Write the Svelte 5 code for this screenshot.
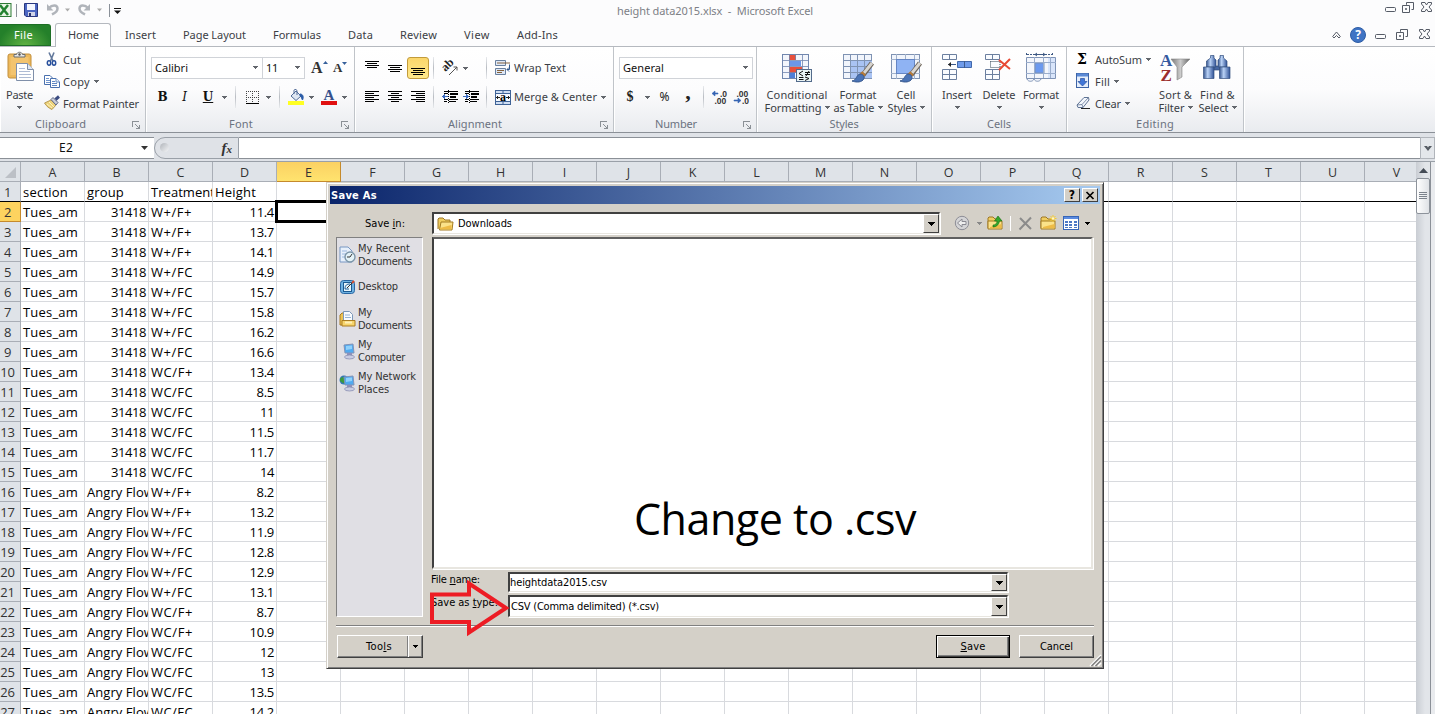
<script>
  // Tightens or loosens tracking so that a label occupies its designed width.
  function fit(node, width) {
    const natural = node.getBoundingClientRect().width;
    if (width) node.style.letterSpacing = `${(width - natural) / node.textContent.length}px`;
  }

  const tabs = [
    ['Insert', 30], ['Page Layout', 62], ['Formulas', 47], ['Data', 24],
    ['Review', 36], ['View', 25], ['Add-Ins', 40]
  ];
  const columns = 'ABCDEFGHIJKLMNOPQRSTUV'.split('');
  const a = 'W+/F+', b = 'W+/FC', c = 'WC/F+', d = 'WC/FC';
  const records = [
    [a, '11.4'], [a, '13.7'], [a, '14.1'], [b, '14.9'], [b, '15.7'], [b, '15.8'], [b, '16.2'],
    [b, '16.6'], [c, '13.4'], [d, '8.5'], [d, '11'], [d, '11.5'], [d, '11.7'], [d, '14'],
    [a, '8.2'], [a, '13.2'], [b, '11.9'], [b, '12.8'], [b, '12.9'], [b, '13.1'], [c, '8.7'],
    [c, '10.9'], [d, '12'], [d, '13'], [d, '13.5'], [d, '14.2']
  ];
  const numWidth = (s) => s.replace('.', '').length * 7 + (s.includes('.') ? 3.5 : 0);
  const rows = [
    [['section', 45], ['group', 37], ['Treatment', 64], ['Height', 41]],
    ...records.map(([t, h], i) => [
      ['Tues_am', 55],
      i < 14 ? ['31418', 35, true] : ['Angry Flow', 67],
      [t, t === a ? 41 : 42],
      [h, numWidth(h), true]
    ])
  ];
  const places = [
    ['recent', [['My Recent', 52], ['Documents', 54]]],
    ['desktop', [['Desktop', 40]]],
    ['docs', [['My', 14], ['Documents', 54]]],
    ['computer', [['My', 14], ['Computer', 47]]],
    ['network', [['My Network', 58], ['Places', 31]]]
  ];
</script>

{#snippet t(text, w)}<span class="t" use:fit={w}>{text}</span>{/snippet}
{#snippet key(pre, k, post, w)}<span class="t" use:fit={w}>{pre}<u>{k}</u>{post}</span>{/snippet}
{#snippet arr()}<svg class="arr" width="5" height="3" shape-rendering="crispEdges"><path d="M0 0H5V1H4V2H3V3H2V2H1V1H0Z" fill="currentColor" /></svg>{/snippet}
{#snippet drop()}<svg width="7" height="4" shape-rendering="crispEdges"><path d="M0 0H7V1H6V2H5V3H4V4H3V3H2V2H1V1H0Z" /></svg>{/snippet}
{#snippet launcher()}<svg class="launcher" width="8" height="8" shape-rendering="crispEdges"><path d="M0 6V0H7V1H1V6ZM3 3L7 7V4H8V8H4V7H6L3 4Z" fill="#8b9096" /></svg>{/snippet}

{#snippet winbtns(gap)}
  <svg class="winbtns" width={47 + gap * 2} height="13" fill="none" stroke="#555b66">
    <rect x=".5" y="6.5" width="10" height="4" rx="1" />
    <path transform="translate({gap} 0)" d="M21.5 3.500V1.500H28.500V8.500H26.500M17.500 4.500H24.500V11.500H17.500ZM20.500 7.500H21.500V8.500H20.500ZM21.500 4V3.500" />
    <path transform="translate({gap * 2} 0)" d="M36.500 1.500H40L41.500 4L43 1.500H46.500V3L44 6L46.500 9V10.500H43L41.500 8L40 10.500H36.500V9L39 6L36.500 3Z" />
  </svg>
{/snippet}

{#snippet lines(kind)}
  <svg width="14" height="14" shape-rendering="crispEdges">
    {#if kind === 'top'}<path d="M0 0h14v1H0zM2 2h10v1H2zM0 4h14v1H0zM2 6h10v1H2z" />
    {:else if kind === 'mid'}<path d="M0 4h14v1H0zM2 6h10v1H2zM0 8h14v1H0zM2 10h10v1H2z" />
    {:else if kind === 'bot'}<path d="M0 7h14v1H0zM2 9h10v1H2zM0 11h14v1H0zM2 13h10v1H2z" />
    {:else if kind === 'left'}<path d="M0 1h14v1H0zM0 3h9v1H0zM0 5h14v1H0zM0 7h9v1H0zM0 9h14v1H0zM0 11h9v1H0z" />
    {:else if kind === 'center'}<path d="M0 1h14v1H0zM3 3h8v1H3zM0 5h14v1H0zM3 7h8v1H3zM0 9h14v1H0zM3 11h8v1H3z" />
    {:else}<path d="M0 1h14v1H0zM5 3h9v1H5zM0 5h14v1H0zM5 7h9v1H5zM0 9h14v1H0zM5 11h9v1H5z" />{/if}
  </svg>
{/snippet}

{#snippet brush()}
  <path d="M30 10L21 22" stroke="#6b6258" stroke-width="5" />
  <path d="M30 10L22 20" stroke="#d8d5d0" stroke-width="3" />
  <path d="M22 20L19 23" stroke="#b87a35" stroke-width="5" />
  <path d="M10 28C15 27 14 22 18 21C22 21 23 25 21 27C18 30 13 29 10 28Z" fill="#4a73b5" stroke="#38598f" />
{/snippet}

{#snippet icon(name)}
  {#if name === 'paste'}
    <svg width="28" height="30">
      <rect x="2" y="2" width="23" height="24" rx="2" fill="#edb95c" stroke="#c28e3b" />
      <rect x="4.500" y="5" width="18" height="18" fill="#f3c46f" />
      <path d="M8 5V2.500H10.500C11 -.5 16 -.5 16.500 2.500H19V5Z" fill="#e8e8e8" stroke="#686c70" />
      <circle cx="13.500" cy="2.500" r="1.200" fill="#555" />
      <path d="M10.500 11.500H21.500L27.500 17.500V28.500H10.500Z" fill="#fff" stroke="#7f8fa9" />
      <path d="M21.500 11.500V17.500H27.500" fill="#dfe7f3" stroke="#7f8fa9" />
      <path d="M13 16.500H19M13 19.500H24M13 22.500H25M13 25.500H25" stroke="#aebbd4" />
    </svg>
  {:else if name === 'cut'}
    <svg width="16" height="16" fill="none">
      <path d="M5 1.500L9 10M10 1.500L6.500 10" stroke="#63799c" stroke-width="1.600" />
      <ellipse cx="5" cy="12" rx="1.700" ry="2.200" stroke="#274f9c" stroke-width="1.500" /><ellipse cx="10" cy="12" rx="1.700" ry="2.200" stroke="#274f9c" stroke-width="1.500" />
    </svg>
  {:else if name === 'copy'}
    <svg width="16" height="16" fill="#fff" stroke="#4a70ae">
      <path d="M.5 2.500H6L8.500 5V11.500H.5Z" /><path d="M2 5.500H5M2 7.500H6M2 9.500H6" stroke="#6f94cd" />
      <path d="M6.500 5.500H12L15.500 9V14.500H6.500Z" /><path d="M12 5.500V9H15M8 8.500H11M8 10.500H13M8 12.500H13" stroke="#5f86c2" />
    </svg>
  {:else if name === 'painter'}
    <svg width="16" height="16">
      <path d="M.5 8L7 5L12 10L8 14.500C5 13 3 12 .5 8Z" fill="#ecd27c" stroke="#a8893f" stroke-width=".8" />
      <path d="M3 9L8 13M5 7L10 12" stroke="#fff3bd" /><path d="M7 4.500L9 2.500L14 7.500L12 10Z" fill="#c9cdd9" stroke="#5f6784" />
      <path d="M11.500 4.500L15 1.500" stroke="#3c4c82" stroke-width="3" />
    </svg>
  {:else if name === 'border'}
    <svg width="13" height="13" shape-rendering="crispEdges" fill="none" stroke="#444"><path d="M0 .5H13M0 6.500H13M.5 0V12M6.500 0V12M12.500 0V12" stroke-dasharray="1 1" /><path d="M0 12.500H13" stroke="#000" /></svg>
  {:else if name === 'bucket'}
    <svg width="17" height="17">
      <path d="M3 7L8 2L13 7L8 11.500Z" fill="#dfe7f2" stroke="#526c98" /><path d="M6 5V1.500C6 0 9 0 9 2V6" fill="none" stroke="#526c98" />
      <path d="M12 5C15 5 16 8 14.500 11C13.500 10 14 8 12 7Z" fill="#2c5da8" stroke="#2c5da8" /><rect y="12" width="16" height="4" fill="#ff2" />
    </svg>
  {:else if name === 'fontcolor'}
    <svg width="16" height="17"><text x="2.500" y="11" font-family="Liberation Serif" font-weight="bold" font-size="15" fill="#35508c">A</text><rect y="12" width="16" height="4" fill="#e01010" /></svg>
  {:else if name === 'angle'}
    <svg width="16" height="16"><text transform="translate(5 12) rotate(-45)" font-family="Liberation Serif" font-weight="bold" font-size="12" x="-1" y="-1" fill="#222">ab</text><path d="M7 15L15 7M15 7H11.500M15 7V10.500" stroke="#555" fill="none" /></svg>
  {:else if name === 'outdent' || name === 'indent'}
    <svg width="16" height="16" shape-rendering="crispEdges">
      <path d="M2 2h14v1H2zM8 4h8v2H8zM8 7h6v2H8zM7 10h9v1H7zM2 12h3v1H2zM7 12h7v1H7zM2 4h4v1H2zM2 10h4v1H2zM6 1h1v1H6zM6 3h1v1H6zM6 5h1v1H6zM6 7h1v1H6zM6 9h1v1H6zM6 11h1v1H6zM6 13h1v1H6z" />
      {#if name === 'outdent'}<path d="M0 7.500L3 5V7H6V8H3V10Z" fill="#3b6bc0" />{:else}<path d="M6 7.500L3 5V7H0V8H3V10Z" fill="#3b6bc0" />{/if}
    </svg>
  {:else if name === 'wrap'}
    <svg width="16" height="16"><path d="M.5 .5H10.500V5.500H.5ZM.5 8.500H10.500V14.500H.5Z" fill="#dfe8f6" stroke="#69809f" /><path d="M2 3H15M2 10.500H9M2 12.500H7" stroke="#84633e" /><path d="M14.500 4.500V9.500H12M14 7.500L12 9.500L14 11.500" stroke="#31588d" fill="none" /></svg>
  {:else if name === 'merge'}
    <svg width="16" height="15"><rect x=".5" y=".5" width="15" height="14" fill="#cfdef3" stroke="#3e6296" /><path d="M1 3.500H15M1 11.500H15M8 0V3M8 12V15" stroke="#3e6296" /><rect x="1" y="4" width="14" height="7" fill="#f7faff" /><path d="M1 7.500H5M11 7.500H15M2.500 6V9M13.500 6V9" stroke="#222" /><text x="5" y="10.500" font-family="Liberation Serif" font-weight="bold" font-size="12">a</text></svg>
  {:else if name === 'incdec' || name === 'decdec'}
    <svg width="17" height="15" font-family="Liberation Sans" font-weight="bold" font-size="8.500" fill="#333">
      {#if name === 'incdec'}<text x="8" y="6.500">.0</text><text x="2.500" y="14">.00</text><path d="M0 3.500L3 1V3H6V4H3V6Z" fill="#3564b4" stroke="#3564b4" stroke-width=".6" />
      {:else}<text x="2.500" y="6.500">.00</text><text x="8" y="14">.0</text><path d="M7 10.500L4 8V10H0V11H4V13Z" fill="#3564b4" stroke="#3564b4" stroke-width=".6" />{/if}
    </svg>
  {:else if name === 'cond'}
    <svg width="32" height="30">
      <rect x="1.500" y="1.500" width="26" height="24" fill="#f3f6fc" stroke="#7187ae" />
      <path d="M8 2H15V7H8ZM8 14H21V20H8Z" fill="#e8503c" /><path d="M8 8H20V13H8Z" fill="#6c97e8" /><path d="M8 20H14V25H8Z" fill="#4f7fd8" />
      <path d="M1 7.500H28M1 13.500H28M1 19.500H28M8.500 1V26M14.500 1V7M21.500 1V26" stroke="#7187ae" stroke-width=".8" />
      <rect x="15.500" y="16.500" width="15" height="12" fill="#e9f3f5" stroke="#536b8b" />
      <path d="M22 18L18 20.500L22 23M18 24.500H22.500M18 26.500H22.500M24 19.500H29M24 21.500H29M28 18L25 23M24 24L28 25.500L24 27.500" fill="none" stroke="#111" />
    </svg>
  {:else if name === 'table' || name === 'style'}
    <svg width="32" height="30" fill="none">
      <rect x="1.500" y="1.500" width="28" height="24" fill="#f1f5fc" stroke="#7f93b3" />
      {#if name === 'table'}<rect x="8" y="8" width="22" height="17" fill="#a9c3f3" /><path d="M1 7.500H30M1 13.500H30M1 19.500H30M8.500 1V26M15.500 1V26M22.500 1V26" stroke="#7f93b3" />
      {:else}<path d="M1 6.500H30M1 20.500H30M6.500 1V26M24.500 1V26M15.500 1V6" stroke="#a3b3cb" /><rect x="6.500" y="6.500" width="18" height="14" fill="#8fb3f3" stroke="#6485c4" />{/if}
      {@render brush()}
    </svg>
  {:else if name === 'insert' || name === 'delete'}
    <svg width="32" height="30" fill="#fafcff" stroke="#6b7f9f">
      <path d="M1.500 1.500H15.500V6.500H1.500ZM8.500 1V7M1.500 16.500H15.500V26.500H1.500ZM8.500 16V27M1 21.500H16" />
      {#if name === 'insert'}<path d="M16.500 8.500H30.500V14.500H16.500Z" fill="#6f9bea" stroke="#4268ab" /><path d="M23.500 8V15M7 11.500H15" stroke="#3d5a8c" /><path d="M7 11.500L10 9V14Z" fill="#222" stroke="none" />
      {:else}<path d="M6.500 8.500H16V14.500H6.500Z" stroke-dasharray="1 1" stroke="#345" /><path d="M15 7L26 16M26 6L15 17" stroke="#e84a35" stroke-width="2" />{/if}
    </svg>
  {:else if name === 'format'}
    <svg width="32" height="30" fill="none" stroke="#7f93b5">
      <path d="M2 1.500H28M1.500 0V3M27.500 0V3" stroke="#3f5a84" stroke-dasharray="2 1" /><path d="M10 1.500H20M12 0L10 1.500L12 3M18 0L20 1.500L18 3" stroke="#3f5a84" />
      <path d="M1.500 4.500H30.500V25.500H1.500Z" fill="#f3f6fc" /><path d="M10 10H19V20H10Z" fill="#6b99ef" /><path d="M23 5H30V25H23Z" fill="#d9e5fa" stroke="none" />
      <path d="M1 9.500H31M1 20.500H31M9.500 4V25M18.500 4V25M25.500 4V25" stroke="#9aadcc" /><path d="M2 26C3 29 8 29 9 26C10 29 15 29 16 26" fill="#f3f6fc" />
    </svg>
  {:else if name === 'fill'}
    <svg width="13" height="16"><rect x=".5" y=".5" width="12" height="14" fill="#e5eefb" stroke="#3e64a6" /><path d="M1 2H12" stroke="#5b8ad6" stroke-width="3" /><path d="M4.500 5.500H8.500V8.500H11L6.500 13L2 8.500H4.500Z" fill="#4277d8" stroke="#2850a0" stroke-width=".7" /></svg>
  {:else if name === 'erase'}
    <svg width="15" height="14"><path d="M1 9L8 1.500H12.500L13 4L7 11.500H2Z" fill="#f3f6fc" stroke="#5f7394" /><path d="M1 9L6 8.500L12.500 1.500M6 8.500L7 11.500" stroke="#5f7394" fill="none" stroke-width=".8" /><path d="M5 12.500H14" stroke="#222" /></svg>
  {:else if name === 'sort'}
    <svg width="32" height="30" font-family="Liberation Serif" font-weight="bold" font-size="17">
      <defs><linearGradient id="fun"><stop stop-color="#777" /><stop offset=".5" stop-color="#ccc" /><stop offset="1" stop-color="#666" /></linearGradient></defs>
      <path d="M11 6H30L22 14V24L17 27V14Z" fill="url(#fun)" stroke="#888" stroke-width=".6" />
      <text x="0" y="12.500" fill="#35599f">A</text><text x=".5" y="28" fill="#9b2d2d">Z</text>
    </svg>
  {:else if name === 'find'}
    <svg width="32" height="30">
      <defs><linearGradient id="bin"><stop stop-color="#35548e" /><stop offset=".4" stop-color="#b9d2f6" /><stop offset="1" stop-color="#2f5196" /></linearGradient></defs>
      <g transform="translate(-1 0)" stroke="#34507f" stroke-width=".7"><path d="M13 13H18.500V17H13Z" fill="#4566a1" /><g fill="url(#bin)"><path d="M9.500 2.500H13V5L15 7V14H5.500V8L9.500 5Z" /><path d="M19 2.500H22.500V5L26 8V14H17V7L19 5Z" /><path d="M2.500 14H13V25.500H2.500Z" /><path d="M18.500 14H29V25.500H18.500Z" /></g></g>
    </svg>
  {:else if name === 'folder' || name === 'up' || name === 'new'}
    <svg width="17" height="16">
      <path d="M1 13V3L2 2H6L8 4H13V6" fill="#f0cd60" stroke="#9c7726" />
      {#if name === 'folder'}<path d="M2.500 14L4 6H16L15 14Z" fill="#fbe28a" stroke="#a37b22" />{:else}<path d="M1 14V6H15V14Z" fill="#fbe28a" stroke="#a37b22" />{/if}
      <path d="M3 13.200H14.500V9L3 12Z" fill="#eebb46" />
      {#if name === 'up'}<path d="M6 10C9 10 10 8 10 6H7.500L11 1L15 6H12.500C12 10 9 12 6 12Z" fill="#36a62c" stroke="#157013" stroke-width=".6" />{/if}
      {#if name === 'new'}<path d="M13 0V7M9.500 3.500H16.500M10.500 1L15.500 6M15.500 1L10.500 6" stroke="#f7cb30" /><circle cx="13" cy="3.500" r="1.300" fill="#fff8c8" />{/if}
    </svg>
  {:else if name === 'back'}
    <svg width="16" height="16"><circle cx="8" cy="8" r="6.700" fill="#d4d4d6" stroke="#8d8d96" /><path d="M3.500 8L8 4V6.500H12V9.500H8V12Z" fill="#eee" stroke="#898991" /></svg>
  {:else if name === 'x'}
    <svg width="15" height="15"><path d="M2 2L13 13M13 1.500L1.500 13.500" stroke="#8b8b8b" stroke-width="2" /></svg>
  {:else if name === 'views'}
    <svg width="16" height="14" shape-rendering="crispEdges"><rect x=".5" y=".5" width="15" height="13" fill="#fff" stroke="#3765b7" /><path d="M1 1H15V3H1Z" fill="#5b8be0" /><path d="M2 5h3v2H2zM6 5h3v2H6zM11 5h3v2h-3zM2 8h3v2H2zM6 8h3v2H6zM11 8h3v2h-3zM2 11h3v1H2zM6 11h3v1H6zM11 11h3v1h-3z" fill="#4d78c4" /></svg>
  {:else if name === 'recent'}
    <svg width="18" height="18"><path d="M1 1H9L13 5V16H1Z" fill="#e7f0fb" stroke="#7897c3" /><path d="M3 5H8M3 8H8M3 11H7" stroke="#9cb9de" /><circle cx="11" cy="11" r="5" fill="#e3f2f7" stroke="#7b95a8" stroke-width="1.400" /><path d="M11 11L13 8M11 11H8" stroke="#333" /></svg>
  {:else if name === 'desktop'}
    <svg width="18" height="18"><rect x="1.500" y="2.500" width="14" height="13" rx="3" fill="#6fb2e2" stroke="#2967a3" /><rect x="4.500" y="4.500" width="8" height="9" fill="#e7f5fc" stroke="#1c5a91" /><path d="M6 11C6 7 8 6 11 6M6 11H10" stroke="#195a97" fill="none" /><path d="M8 10L15 3" stroke="#333" /><path d="M13 5L15 3" stroke="#d44a2c" stroke-width="2" /></svg>
  {:else if name === 'docs'}
    <svg width="18" height="18"><path d="M1 5L3 3H6V15H1Z" fill="#ecc353" stroke="#ab7d22" /><path d="M4.500 1.500H10.500L13.500 4.500V12H4.500Z" fill="#f8fbff" stroke="#7e98b9" /><path d="M6 5H11M6 7.500H12" stroke="#97b3d2" /><path d="M3 10.500H16V16H3Z" fill="#f7d56d" stroke="#ab7d22" /><path d="M6 12.500H13" stroke="#fff0b8" stroke-width="2" /></svg>
  {:else if name === 'computer' || name === 'network'}
    <svg width="18" height="18">{#if name === 'network'}<circle cx="5" cy="6" r="4.500" fill="#3377b5" /><path d="M1 5C3 1 5 5 8 3V8C5 11 3 8 1 7Z" fill="#3b9b3d" />{/if}<path d="M5 3L14 2L15 11L6 11Z" fill="#51aaf0" stroke="#8393b6" /><path d="M7 4L13 3.500V7L7 8Z" fill="#91d1fb" /><path d="M8 11H13V14H8Z" fill="#8f90ba" /><ellipse cx="10.500" cy="15" rx="5" ry="2" fill="#c9cce2" stroke="#8288aa" stroke-width=".7" /></svg>
  {/if}
{/snippet}

{#snippet big(name, l1, w1, l2, w2)}
  <div class="big">
    <div class="bigicon">{@render icon(name)}</div>
    <div class="line">{@render t(l1, w1)}</div>
    <div class="line second">{#if l2}{@render t(l2, w2)}{/if}{@render arr()}</div>
  </div>
{/snippet}
{#snippet small(name, label, w, more)}
  <div class="small"><i>{#if name === 'sum'}<b class="sigma">Σ</b>{:else}{@render icon(name)}{/if}</i>{@render t(label, w)}{#if more}{@render arr()}{/if}</div>
{/snippet}

<div class="window">
  <header class="titlebar">
    <div class="quick">
      <svg width="124" height="22">
        <rect x="-5" y="3.500" width="16" height="13" fill="#e9f5e6" stroke="#2d7a35" /><path d="M0 5L8 15M8 5L0 15" stroke="#238331" stroke-width="2.500" />
        <path d="M16.500 4V17M109.500 4V17" stroke="#8a9098" />
        <path d="M24.500 3.500H37.500V16.500H26L24.500 15Z" fill="#4c67c2" stroke="#29377f" /><path d="M27 4H35V10H27Z" fill="#f4f7ff" /><path d="M28 12H35V16H28Z" fill="#d0d4e8" /><path d="M29 13H31V16H29Z" fill="#28336e" />
        <g fill="none" stroke="#b0b4ba" stroke-width="2.500"><path d="M49 8C52 4.500 57.500 4.500 57.500 8.500C57.500 12 55 13 52 14.500" /><path d="M88 8C85 4.500 79.500 4.500 79.500 8.500C79.500 12 82 13 85 14.500" /></g>
        <path d="M47 4V10.500H53.500ZM90 4V10.500H83.500Z" fill="#b0b4ba" /><path d="M65 8.500H70L67.500 11.500ZM97 8.500H102L99.500 11.500Z" fill="#aaa" />
        <path d="M114 8.500H121" stroke="#111" /><path d="M114 10.500H121L117.500 14Z" fill="#111" />
      </svg>
    </div>
    <div class="caption">{@render t('height data2015.xlsx  -  Microsoft Excel', 196)}</div>
    {@render winbtns(0)}
  </header>

  <nav class="tabs">
    <div class="file">{@render t('File', 19)}</div>
    <div class="home">{@render t('Home', 31)}</div>
    <div class="others">
      {#each tabs as [name, w]}<div>{@render t(name, w + 1)}</div>{/each}
    </div>
    <div class="tabtools">
      <svg width="9" height="8" fill="none" stroke="#555b66"><path d="M.7 5.500L4.500 1L8.300 5.500L7 7L4.500 4.500L2 7Z" /></svg>
      <b class="help">?</b>
      {@render winbtns(4)}
    </div>
  </nav>

  <section class="ribbon">
    <div class="group clipboard">
      <div class="body">
        {@render big('paste', 'Paste', 27)}
        <div class="stack">{@render small('cut', 'Cut', 18)}{@render small('copy', 'Copy', 27, true)}{@render small('painter', 'Format Painter', 76)}</div>
      </div>
      <div class="name">{@render t('Clipboard', 51)}{@render launcher()}</div>
    </div>
    <div class="group font">
      <div class="body two">
        <div class="tools">
          <div class="combo face">{@render t('Calibri', 33)}{@render arr()}</div>
          <div class="combo size">{@render t('11', 12)}{@render arr()}</div>
          <div class="grow">A<svg width="5" height="3"><path d="M0 3H5L2.500 0Z" fill="#36609b" /></svg></div>
          <div class="grow shrink">A<svg width="5" height="3"><path d="M0 0H5L2.500 3Z" fill="#36609b" /></svg></div>
        </div>
        <div class="tools fontrow">
          <b>B</b><b class="it">I</b><b class="un">U</b>{@render arr()}<hr />{@render icon('border')}{@render arr()}<hr />{@render icon('bucket')}{@render arr()}{@render icon('fontcolor')}{@render arr()}
        </div>
      </div>
      <div class="name">{@render t('Font', 24)}{@render launcher()}</div>
    </div>
    <div class="group align">
      <div class="body two">
        <div class="tools alignrow">
          {@render lines('top')}{@render lines('mid')}<div class="on">{@render lines('bot')}</div><hr />
          <div class="pair">{@render icon('angle')}{@render arr()}</div><hr />
          <div class="label">{@render icon('wrap')}{@render t('Wrap Text', 52)}</div>
        </div>
        <div class="tools alignrow">
          {@render lines('left')}{@render lines('center')}{@render lines('right')}<hr />
          <div class="pair">{@render icon('outdent')}{@render icon('indent')}</div><hr />
          <div class="label">{@render icon('merge')}{@render t('Merge & Center', 83)}{@render arr()}</div>
        </div>
      </div>
      <div class="name">{@render t('Alignment', 54)}{@render launcher()}</div>
    </div>
    <div class="group number">
      <div class="body two">
        <div class="tools"><div class="combo general">{@render t('General', 41)}{@render arr()}</div></div>
        <div class="tools numrow"><b>$</b>{@render arr()}<span>%</span><b class="comma">,</b><hr />{@render icon('incdec')}{@render icon('decdec')}</div>
      </div>
      <div class="name">{@render t('Number', 42)}{@render launcher()}</div>
    </div>
    <div class="group styles">
      <div class="body">{@render big('cond', 'Conditional', 61, 'Formatting', 57)}{@render big('table', 'Format', 37, 'as Table', 41)}{@render big('style', 'Cell', 19, 'Styles', 29)}</div>
      <div class="name">{@render t('Styles', 29)}</div>
    </div>
    <div class="group cells">
      <div class="body">{@render big('insert', 'Insert', 30)}{@render big('delete', 'Delete', 33)}{@render big('format', 'Format', 36)}</div>
      <div class="name">{@render t('Cells', 24)}</div>
    </div>
    <div class="group editing">
      <div class="body">
        <div class="stack">{@render small('sum', 'AutoSum', 47, true)}{@render small('fill', 'Fill', 15, true)}{@render small('erase', 'Clear', 26, true)}</div>
        {@render big('sort', 'Sort &', 33, 'Filter', 26)}{@render big('find', 'Find &', 35, 'Select', 30)}
      </div>
      <div class="name">{@render t('Editing', 38)}</div>
    </div>
  </section>

  <section class="formula">
    <div class="namebox">{@render t('E2', 14)}<svg width="7" height="4"><path d="M0 0H7L3.500 4Z" fill="#333" /></svg></div>
    <div class="fx"><i></i><em>f<small>x</small></em></div>
    <div class="input"></div>
    <div class="expand"><svg width="8" height="7"><path d="M0 1H3L4 2.500L5 1H8L4 6Z" fill="#555b63" /></svg></div>
  </section>

  <main class="sheet">
    <div class="grid">
      <div class="row heads">
        <div class="corner"><svg width="11" height="11"><path d="M11 0V11H0Z" fill="#bcc0c6" /></svg></div>
        {#each columns as col}<div class:sel={col === 'E'}>{col}</div>{/each}
      </div>
      {#each rows as row, r}
        <div class="row" class:first={r === 0}>
          <div class="rownum" class:sel={r === 1}>{@render t(String(r + 1), String(r + 1).length * 7.2)}</div>
          {#each columns as _, i}
            <div class="cell" class:num={row[i]?.[2]}>{#if row[i]}{@render t(row[i][0], row[i][1])}{/if}</div>
          {/each}
        </div>
      {/each}
      <div class="cursor"></div>
    </div>
    <aside class="scroll">
      <div class="up"><svg width="9" height="5"><path d="M0 5H9L4.500 0Z" fill="#444b55" /></svg></div>
      <div class="thumb"><svg width="8" height="8" shape-rendering="crispEdges"><path d="M0 .5H8M0 2.500H8M0 4.500H8M0 6.500H8" stroke="#7b828c" /></svg></div>
    </aside>
  </main>

  <div class="dialog">
    <div class="dtitle">{@render t('Save As', 46)}<span class="tb">?</span><span class="tb"><svg width="8" height="7"><path d="M.5 0L7.500 7M7.500 0L.5 7" stroke="#000" stroke-width="1.700" /></svg></span></div>
    <div class="lookin">
      <div class="lk">{@render key('Save ', 'i', 'n:', 40)}</div>
      <div class="field where">{@render icon('folder')}{@render t('Downloads', 54)}<span class="drop">{@render drop()}</span></div>
      <div class="dtools">{@render icon('back')}<span class="dim">{@render arr()}</span>{@render icon('up')}<hr />{@render icon('x')}{@render icon('new')}{@render icon('views')}{@render arr()}</div>
    </div>
    <div class="middle">
      <div class="places">
        {#each places as [name, labels]}
          <div class="place" class:single={labels.length === 1}>{@render icon(name)}<div>{#each labels as [l, w]}<p>{@render t(l, w)}</p>{/each}</div></div>
        {/each}
      </div>
      <div class="right">
        <div class="files"><div class="note">{@render t('Change to .csv', 282)}</div></div>
        <div class="entry name1"><label for="fn">{@render key('File ', 'n', 'ame:', 49)}</label><div class="field" id="fn">{@render t('heightdata2015.csv', 97)}<span class="drop">{@render drop()}</span></div></div>
        <div class="entry type"><label for="ft">{@render key('Save as ', 't', 'ype:', 67)}</label><div class="field" id="ft">{@render t('CSV (Comma delimited) (*.csv)', 148)}<span class="drop">{@render drop()}</span></div></div>
      </div>
    </div>
    <div class="actions">
      <div class="btn tool"><span>{@render key('Too', 'l', 's', 26)}</span><span class="split">{@render arr()}</span></div>
      <div class="btn default">{@render key('', 'S', 'ave', 25)}</div>
      <div class="btn">{@render t('Cancel', 33)}</div>
    </div>
    <svg class="grip" width="11" height="11" stroke-width="1.500"><path d="M0 11L11 0M4 11L11 4M8 11L11 8" stroke="#fff" /><path d="M1.500 11L11 1.500M5.500 11L11 5.500" stroke="#808080" /></svg>
    <svg class="pointer" width="84" height="60"><path d="M4 14.500H41V3.500L78 28L41 52.500V42H4Z" fill="none" stroke="#ed1c24" stroke-width="4" /></svg>
  </div>
</div>

<style>
  :global(body) { margin: 0; overflow: hidden; }
  .window { position: relative; width: 1435px; height: 714px; overflow: hidden; display: flex; flex-direction: column; background: #fcfcfd; font: 11px 'Noto Sans', sans-serif; color: #3b3e45; }
  .window * { box-sizing: border-box; }
  svg { display: block; flex: none; overflow: visible; }
  .t { display: inline-block; white-space: pre; flex: none; }
  .arr { color: #62666c; }
  hr { margin: 0; border: 0; width: 1px; height: 22px; background: linear-gradient(#e8eaed, #b9bdc3, #e8eaed); flex: none; }

  .titlebar { height: 23px; display: flex; justify-content: space-between; position: relative; }
  .quick { width: 617px; }
  .caption { flex: 1; line-height: 22px; color: #7d8086; }
  .titlebar .winbtns { margin: 1px 3px 0 0; }
  .tabs { height: 24px; display: flex; border-bottom: 1px solid #b5b9bf; line-height: 22px; padding-top: 1px; }
  .file { width: 51px; height: 22px; padding-left: 14px; color: #fff; border-radius: 0 3px 0 0; background: radial-gradient(ellipse at 50% 110%, #63b544, #24802a 75%); border: 1px solid #1d6e25; border-left: 0; line-height: 20px; }
  .home { width: 56px; height: 24px; margin: -1px 0 0 4px; padding: 1px 0 0 12px; border: 1px solid #b5b9bf; border-bottom: 0; border-radius: 3px 3px 0 0; background: #fff; line-height: 20px; }
  .others { display: flex; gap: 27px; padding-left: 14px; flex: 1; }
  .tabtools { display: flex; align-items: center; }
  .help { width: 16px; height: 16px; border-radius: 50%; background: #3f74c4; border: 1px solid #2e5da5; color: #fff; line-height: 14px; text-align: center; font-size: 12px; margin: 0 9px 0 9px; }
  .tabtools .winbtns { margin: 0 5px 2px 0; }

  .ribbon { height: 86px; display: flex; background: linear-gradient(#fff, #fcfcfd 50%, #e9ebef); border-bottom: 1px solid #8b9097; }
  .group { border-right: 1px solid #c0c4c9; box-shadow: inset 1px 0 #fff, 1px 0 #fff; display: flex; flex-direction: column; }
  .body { height: 70px; display: flex; }
  .name { height: 15px; line-height: 14px; position: relative; display: flex; justify-content: center; color: #6b7280; }
  .launcher { position: absolute; right: 5px; bottom: 3px; }
  .clipboard { width: 146px; }
  .font { width: 209px; }
  .align { width: 259px; }
  .number { width: 143px; }
  .styles { width: 175px; }
  .cells { width: 135px; }
  .editing { width: 177px; }
  .clipboard .name { padding-right: 24px; }
  .font .name, .align .name, .number .name { padding-right: 18px; }
  .big { display: flex; flex-direction: column; align-items: center; flex: none; }
  .bigicon { height: 41px; padding-top: 6px; display: flex; justify-content: center; }
  .line { height: 13px; line-height: 12px; display: flex; align-items: center; }
  .second { gap: 3px; }
  .clipboard .big { width: 39px; }
  .clipboard .stack { padding-left: 5px; }
  .clipboard .bigicon { padding-top: 5px; }
  .stack { display: flex; flex-direction: column; padding-top: 1px; }
  .small { height: 22px; display: flex; align-items: center; }
  .small i { width: 19px; display: flex; }
  .small .arr { margin-left: 4px; }
  .sigma { font: bold 14px 'DejaVu Serif', serif; color: #000; padding-left: 1px; }
  .styles .big:nth-child(1) { width: 78px; margin-left: 1px; }
  .styles .big:nth-child(2) { width: 46px; margin-left: -1px; }
  .styles .big:nth-child(3) { width: 52px; margin-left: -1px; }
  .cells .body { padding-left: 4px; }
  .cells .big { width: 42px; }
  .cells .big:nth-child(2) .bigicon { padding-left: 2px; }
  .editing .stack { width: 90px; padding-left: 9px; }
  .editing .big { width: 37px; }
  .editing .big:nth-child(3) { margin-left: 5px; }

  .two { flex-direction: column; padding-top: 10px; gap: 7px; }
  .tools { height: 22px; display: flex; align-items: center; flex: none; }
  .combo { height: 22px; border: 1px solid #d0d3d8; background: #fff; display: flex; align-items: center; justify-content: space-between; padding: 0 4px 1px 3px; color: #111; }
  .font .tools:first-child { padding-left: 5px; }
  .face { width: 112px; }
  .size { width: 43px; margin-left: -1px; }
  .grow { display: flex; width: 23px; padding-left: 6px; font: bold 16px 'Liberation Serif', serif; color: #333; }
  .grow svg { margin-top: 2px; }
  .shrink { font-size: 13px; padding-left: 5px; }
  .fontrow { display: grid; grid-template-columns: 23px 21px 26px 7px 14px 20px 12px 10px 24px 7px 27px 5px; align-items: center; padding-left: 5px; justify-items: center; }
  .fontrow b { font: bold 12px 'DejaVu Serif', serif; color: #111; }
  .fontrow .it { font-style: italic; font-weight: normal; }
  .fontrow .un { text-decoration: underline; }
  .alignrow { display: grid; grid-template-columns: 23px 23px 23px 9px 43px 10px 120px; justify-items: center; padding-left: 5px; }
  .on { width: 22px; height: 22px; display: grid; place-items: center; border: 1px solid #c29b3b; border-radius: 3px; background: linear-gradient(#fbd66b, #ffe98b); }
  .pair { width: 43px; display: flex; align-items: center; gap: 5px; justify-self: start; padding-left: 4px; }
  .label { justify-self: start; padding-left: 4px; display: flex; align-items: center; }
  .label .t { margin: -1px 0 0 3px; }
  .label .arr { margin-left: 4px; }
  .number .tools:first-child { padding-left: 5px; }
  .general { width: 134px; }
  .numrow { display: grid; grid-template-columns: 22px 12px 23px 24px 6px 28px 16px; padding-left: 5px; justify-items: center; color: #222; }
  .numrow b { font: bold 14px 'Liberation Serif', serif; }
  .numrow .comma { font-size: 22px; line-height: 10px; margin-top: -10px; }
  .numrow span { font-size: 12px; line-height: 14px; }

  .formula { height: 29px; display: flex; background: #dfe2e7; padding: 4px 0; border-bottom: 1px solid #9aa0a8; flex: none; }
  .formula > div { border-top: 1px solid #8b9097; border-bottom: 1px solid #8b9097; background: #fff; height: 22px; }
  .namebox { width: 154px; display: flex; align-items: center; justify-content: space-between; padding: 0 6px 1px 59px; color: #111; font-size: 12px; }
  .formula .fx { width: 85px; background: #dfe2e7; border: 1px solid #9aa0a8; border-radius: 11px 0 0 11px; display: flex; justify-content: space-between; align-items: center; padding: 0 6px 0 5px; }
  .fx i { width: 9px; height: 9px; border-radius: 50%; background: linear-gradient(135deg, #b0b4ba, #f4f5f7); margin-top: -2px; }
  .fx em { font: italic bold 15px/16px 'Liberation Serif', serif; color: #333; }
  .fx small { font-size: 11px; }
  .input { flex: 1; }
  .formula .expand { width: 15px; border: 1px solid #b1b5bb; background: #e4e7eb; display: grid; place-items: center; }

  .sheet { flex: 1; display: flex; min-height: 0; }
  .grid { width: 1416px; position: relative; overflow: hidden; font: 13px 'Open Sans', sans-serif; color: #000; background: #fff; }
  .row { display: grid; grid-template-columns: 21px repeat(21, 64px) 64px; height: 20px; }
  .row > div { border-right: 1px solid #d8dade; border-bottom: 1px solid #d8dade; height: 20px; line-height: 20px; overflow: hidden; white-space: nowrap; }
  .heads > div { text-align: center; background: #dfe3e8; border-color: #a9aeb6; color: #333; font-size: 12.5px; line-height: 21px; }
  .heads .corner { padding: 5px 0 0 5px; }
  .row > .sel { background: linear-gradient(#fbd163, #ffe36e); border-color: #c58a2c; }
  .row > .rownum { background: #dfe3e8; border-color: #a9aeb6; color: #333; text-align: center; padding-right: 5px; }
  .row > .rownum.sel { background: #fdd35f; border-color: #c58a2c; }
  .row .cell { padding: 0 2px 0 2px; }
  .row .num { text-align: right; }
  .row.first > div { border-bottom-color: #000; }
  .cursor { position: absolute; left: 275px; top: 38px; width: 67px; height: 23px; border: 3px solid #000; }
  .scroll { width: 19px; background: linear-gradient(90deg, #c9cdd3, #e2e5e9 60%); border-right: 4px solid #e9ebee; box-shadow: inset -1px 0 #8b9097; }
  .up { height: 16px; display: grid; place-items: center; }
  .thumb { width: 14px; height: 36px; border: 1px solid #8d939b; border-radius: 2px; background: linear-gradient(90deg, #fff, #dfe2e6); display: grid; place-items: center; }

  .dialog { position: absolute; left: 326px; top: 182px; width: 778px; height: 487px; padding: 4px; background: #d4d0c8; border: 1px solid; border-color: #d4d0c8 #404040 #404040 #d4d0c8; box-shadow: inset 1px 1px #fff, inset -1px -1px #808080; color: #000; display: flex; flex-direction: column; font: 11px/13px 'DejaVu Sans Condensed', 'DejaVu Sans', sans-serif; }
  .dialog .arr { color: #000; }
  .dtitle { height: 18px; margin: -1px -1px 0; padding: 0 2px 0 1px; display: flex; align-items: center; background: linear-gradient(90deg, #0a246a, #a6caf0); color: #fff; font-weight: bold; gap: 2px; flex: none; }
  .dtitle > .t { margin-right: auto; }
  .tb { width: 16px; height: 14px; display: grid; place-items: center; background: #d4d0c8; color: #000; border: 1px solid; border-color: #fff #404040 #404040 #fff; font-size: 12px; line-height: 12px; }
  .lookin { height: 33px; display: flex; padding: 8px 0 0 34px; flex: none; }
  .lk { width: 67px; line-height: 23px; }
  .field { height: 20px; background: #fff; border: solid; border-width: 2px 1px 1px 2px; border-color: #404040 #e8e6e0 #e8e6e0 #404040; display: flex; align-items: center; padding-left: 0; box-shadow: 1px 1px #fff; }
  .field .drop { margin-left: auto; width: 16px; height: 100%; background: #d4d0c8; border: 1px solid; border-color: #fff #404040 #404040 #fff; display: grid; place-items: center; }
  .where { width: 508px; height: 22px; padding-left: 3px; margin-right: 1px; }
  .where .t { margin-left: 4px; }
  .dtools { display: grid; grid-template-columns: 26px 8px 24px 6px 24px 22px 24px 8px; padding-left: 8px; align-items: center; justify-items: center; height: 22px; }
  .dtools hr { background: #fff; height: 15px; }
  .dim .arr { color: #888; }
  .middle { display: flex; padding-left: 5px; height: 388px; flex: none; }
  .places { width: 87px; height: 380px; border: 1px solid; border-color: #808080 #fff #fff #808080; background: #e0dfe4; padding: 1px 0 0 2px; color: #333; }
  .place { height: 32px; display: flex; align-items: center; gap: 1px; }
  .place p { margin: 0; height: 13px; }
  .place.single > div { margin-top: -2px; }
  .right { padding-left: 9px; display: flex; flex-direction: column; }
  .files { width: 661px; height: 332px; background: #fff; border: 2px solid; border-color: #606060 #e8e6e0 #e8e6e0 #404040; box-shadow: 1px 1px #fff; padding: 254px 0 0 200px; margin-bottom: 3px; }
  .note { font: 43px/52px 'Open Sans', sans-serif; }
  .entry { display: flex; height: 24px; }
  .entry label { width: 77px; margin-left: -1px; }
  .entry .field { width: 500px; }
  .type { margin-top: -1px; }
  .entry.type .field { height: 22px; padding-left: 1px; }
  .name1 label { padding-top: 1px; }
  .type label { padding-top: 1px; }
  .actions { margin-left: 5px; border-top: 1px solid #808080; box-shadow: inset 0 1px #fff; padding: 9px 0 0 1px; display: flex; gap: 9px; flex: none; width: 758px; }
  .btn { width: 75px; height: 23px; border: 1px solid; border-color: #fff #404040 #404040 #fff; box-shadow: inset -1px -1px #808080; display: flex; align-items: center; justify-content: center; }
  .tool { width: 86px; margin-right: auto; justify-content: flex-end; }
  .tool > span { display: flex; }
  .tool .split { width: 15px; height: 21px; align-items: center; justify-content: center; border-left: 1px solid #808080; box-shadow: inset 1px 0 #fff; margin-left: 15px; }
  .default { width: 74px; border: 1px solid #000; box-shadow: inset 1px 1px #fff, inset -1px -1px #404040, inset -2px -2px #808080; }
  .grip { position: absolute; right: 2px; bottom: 2px; }
  .pointer { position: absolute; left: 101px; top: 397px; }
</style>
